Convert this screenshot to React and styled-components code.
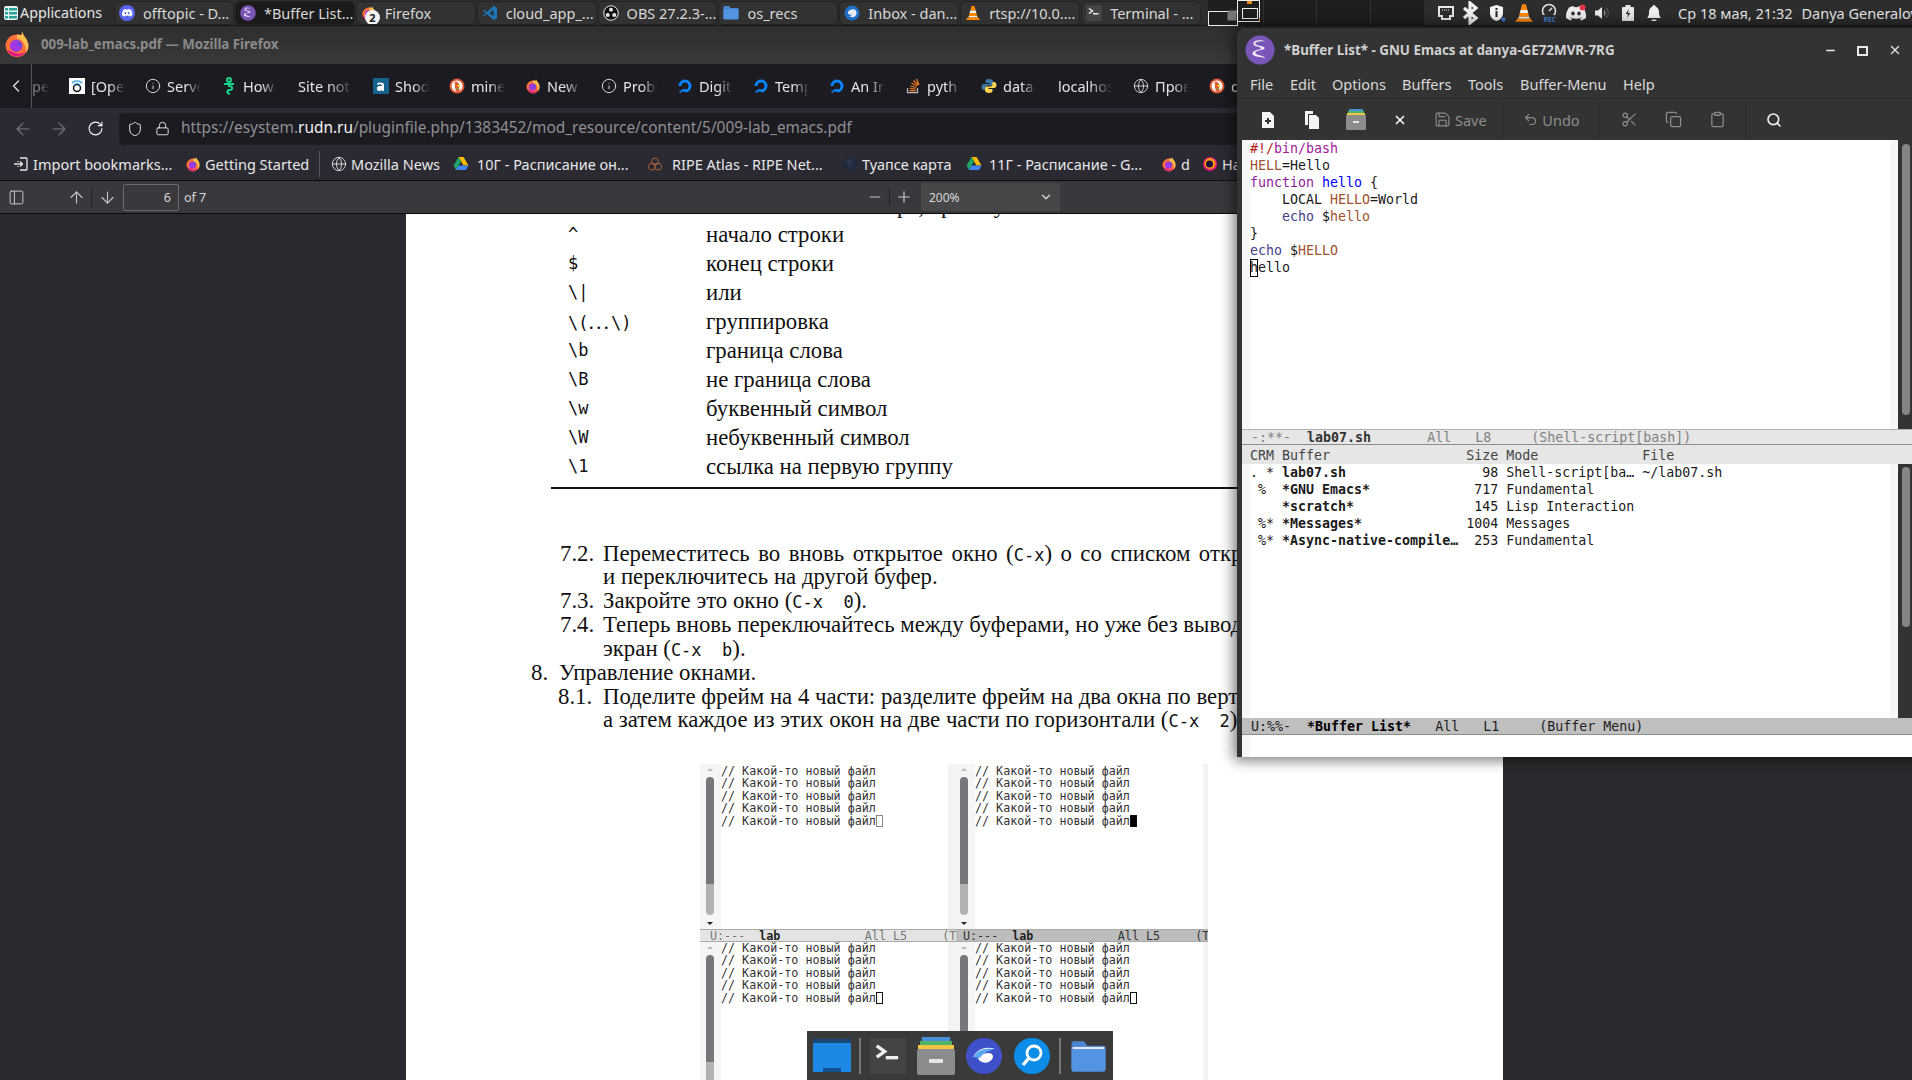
import React from 'react';
import styled, { createGlobalStyle } from 'styled-components';
import {
  ArrowDown,
  ArrowLeft,
  ArrowRight,
  ArrowUp,
  ChevronDown,
  ChevronLeft,
  Clipboard,
  Copy,
  Globe,
  Info,
  Lock,
  Minus,
  PanelLeft,
  Plus,
  RotateCw,
  Save,
  Scissors,
  Search,
  Shield,
  Undo2,
  X,
} from 'lucide-react';

const UI_FONT = '"Noto Sans", "Open Sans", sans-serif';
const MONO_FONT = '"DejaVu Sans Mono", "Liberation Mono", monospace';
const SERIF_FONT = '"Liberation Serif", "DejaVu Serif", serif';

const GlobalStyle = createGlobalStyle`
  html, body {
    margin: 0;
    padding: 0;
    background: #2a2a2e;
    overflow: hidden;
  }
  * { box-sizing: border-box; }
  svg { flex: none; }
`;

const Desktop = styled.div`
  position: relative;
  width: 1912px;
  height: 1080px;
  overflow: hidden;
  display: flex;
  flex-direction: column;
  font-family: ${UI_FONT};
`;

/* ---------- top panel ---------- */

const TopPanel = styled.div`
  height: 26px;
  flex: none;
  display: flex;
  align-items: stretch;
  background: #2d2d2d;
  border-bottom: 1px solid #141414;
  color: #e6e6e6;
  font-size: 14.5px;
`;
const AppMenu = styled.div`
  width: 114px;
  display: flex;
  align-items: center;
  gap: 1px;
  padding-left: 3px;
  white-space: nowrap;
  font-size: 14.3px;
`;
const TaskList = styled.div`
  display: flex;
  gap: 1px;
  padding-top: 1px;
`;
const Task = styled.div`
  position: relative;
  width: 119.9px;
  height: 24px;
  display: flex;
  align-items: center;
  gap: 8px;
  padding-left: 4px;
  padding-bottom: 1px;
  border-radius: 5px;
  border: 1px solid #222;
  background: ${({ $active }) => ($active ? '#1b1b1b' : '#323232')};
  color: #d8d8d8;
  white-space: nowrap;
  overflow: hidden;
`;
const TaskBadge = styled.span`
  position: absolute;
  left: 8px;
  top: 8px;
  width: 15px;
  height: 15px;
  border-radius: 50%;
  background: #f2f2f2;
  color: #222;
  font-size: 11px;
  font-weight: 700;
  line-height: 15px;
  text-align: center;
`;
const Pager = styled.div`
  margin-left: 7px;
  width: 216px;
  background: #1e1e1e;
  display: flex;
`;
const PagerCell = styled.div`
  flex: none;
  width: ${({ $w }) => $w}px;
  border-right: 1px solid #333;
`;
const Tray = styled.div`
  flex: 1;
  display: flex;
  align-items: center;
  padding-left: 9px;
  white-space: nowrap;
  overflow: hidden;
`;
const TraySlot = styled.span`
  flex: none;
  width: ${({ $w }) => $w}px;
  display: flex;
  justify-content: center;
  align-items: center;
`;
const Clock = styled.span`
  margin-left: 11px;
  margin-right: 9px;
`;

/* ---------- firefox ---------- */

const Firefox = styled.div`
  flex: 1;
  min-height: 0;
  display: flex;
  flex-direction: column;
`;
const FfTitle = styled.div`
  height: 38px;
  flex: none;
  display: flex;
  align-items: center;
  gap: 10px;
  padding: 0 0 2px 3px;
  background: linear-gradient(#2e2e2e, #393939);
  color: #8a8a8a;
  font-size: 13.3px;
  font-weight: 700;
`;
const TabStrip = styled.div`
  height: 44px;
  flex: none;
  display: flex;
  align-items: center;
  background: #1c1b22;
  color: #e4e4e4;
  font-size: 14.5px;
`;
const TabBack = styled.div`
  width: 32px;
  height: 100%;
  flex: none;
  display: flex;
  align-items: center;
  justify-content: center;
  border-right: 1px solid #55555c;
`;
const TabScroller = styled.div`
  flex: 1;
  display: flex;
  overflow: hidden;
`;
const TabItem = styled.div`
  flex: none;
  width: ${({ $w }) => $w || 76}px;
  display: flex;
  align-items: center;
  gap: 6px;
  padding-left: ${({ $pad }) => ($pad === undefined ? 8 : $pad)}px;
  padding-right: 12px;
  height: 28px;
`;
const TabLabel = styled.span`
  flex: 1;
  min-width: 0;
  overflow: hidden;
  white-space: nowrap;
  opacity: ${({ $faint }) => ($faint ? 0.45 : 1)};
  -webkit-mask-image: linear-gradient(90deg, #000 55%, transparent 100%);
  mask-image: linear-gradient(90deg, #000 55%, transparent 100%);
`;
const NavBar = styled.div`
  height: 37px;
  flex: none;
  display: flex;
  align-items: center;
  background: #2b2a33;
  padding: 4px 0 0 5px;
  color: #fbfbfe;
`;
const NavButton = styled.span`
  flex: none;
  width: 36px;
  display: flex;
  justify-content: center;
  color: ${({ $dim }) => ($dim ? '#77767d' : '#f0f0f4')};
`;
const UrlField = styled.div`
  flex: 1;
  height: 32px;
  margin-left: 6px;
  display: flex;
  align-items: center;
  padding-left: 8px;
  gap: 12px;
  border-radius: 5px 0 0 5px;
  background: #1c1b22;
  color: #e8e8ea;
`;
const UrlText = styled.span`
  font-size: 15.4px;
  color: #8f8f94;
  white-space: nowrap;
  margin: -2px 0 0 -1px;
  b {
    font-weight: 400;
    color: #f4f4f6;
  }
`;
const Bookmarks = styled.div`
  height: 36px;
  flex: none;
  display: flex;
  align-items: center;
  padding: 2px 0 0 13px;
  background: #2b2a33;
  color: #e8e8ea;
  font-size: 14.5px;
  white-space: nowrap;
  overflow: hidden;
  border-bottom: 1px solid #0e0e10;
`;
const Bookmark = styled.span`
  flex: none;
  width: ${({ $w }) => $w}px;
  display: flex;
  align-items: center;
  gap: ${({ $gap }) => $gap || 4}px;
  overflow: hidden;
`;
const BookmarkSep = styled.span`
  flex: none;
  width: 1px;
  height: 26px;
  background: #55545c;
  margin: 0 11px 0 0;
`;
const PdfBar = styled.div`
  height: 33px;
  flex: none;
  display: flex;
  align-items: center;
  background: #38383d;
  border-bottom: 1px solid #0c0c0d;
  color: #d6d6d8;
  font-size: 12.5px;
`;
const PdfIcon = styled.span`
  flex: none;
  display: flex;
  justify-content: center;
  width: ${({ $w }) => $w}px;
  margin-left: ${({ $ml }) => $ml || 0}px;
  color: #c8c8ca;
`;
const PdfSep = styled.span`
  flex: none;
  width: 1px;
  height: 20px;
  background: #242427;
`;
const PageInput = styled.div`
  flex: none;
  width: 56px;
  height: 27px;
  margin-left: 1px;
  padding-right: 7px;
  text-align: right;
  line-height: 25px;
  background: #38383d;
  border: 1px solid #6a6a6e;
  border-radius: 2px;
`;
const PageCount = styled.span`
  margin-left: 5px;
  width: 677px;
`;
const ZoomSelect = styled.div`
  flex: none;
  width: 139px;
  height: 28px;
  margin-left: 3px;
  display: flex;
  align-items: center;
  justify-content: space-between;
  padding: 0 7px 0 8px;
  background: #474749;
  border-radius: 2px;
  font-size: 12px;
`;

/* ---------- pdf page ---------- */

const Viewer = styled.div`
  flex: 1;
  min-height: 0;
  overflow: hidden;
  background: #2a2a2e;
  padding-left: 406px;
`;
const PdfPage = styled.div`
  width: 1097px;
  height: 100%;
  background: #fff;
  overflow: hidden;
  color: #111;
  font-family: ${SERIF_FONT};
  font-size: 22.8px;
`;
const RegexTable = styled.div`
  margin-top: -23px;
  padding-left: 162px;
`;
const RegexRow = styled.div`
  display: flex;
  height: 29px;
  line-height: 29px;
  white-space: nowrap;
`;
const RegexCode = styled.span`
  flex: none;
  width: 138px;
  font-family: ${MONO_FONT};
  font-size: 17px;
`;
const SerifDots = styled.span`
  font-family: ${SERIF_FONT};
  font-size: 22px;
  letter-spacing: 2px;
`;
const TableRule = styled.div`
  height: 2px;
  margin: 6px 0 0 145px;
  background: #111;
`;
const TaskLines = styled.div`
  margin-top: 52.5px;
`;
const TaskLine = styled.div`
  display: flex;
  height: 23.85px;
  line-height: 23.85px;
  white-space: nowrap;
  padding-left: ${({ $pad }) => $pad}px;
  word-spacing: ${({ $spread }) => $spread || 0}px;
`;
const TaskNum = styled.span`
  flex: none;
  width: ${({ $w }) => $w}px;
`;
const Kbd = styled.span`
  font-family: ${MONO_FONT};
  font-size: 17px;
  white-space: pre;
  word-spacing: 0;
`;

/* embedded emacs screenshot */
const Figure = styled.div`
  margin: 31.5px 0 0 294px;
  width: 508px;
  display: grid;
  grid-template-columns: 256px 252px;
  grid-template-rows: 165px 13px 160px;
  background: #f3f3f3;
  font-family: ${MONO_FONT};
  font-size: 11.7px;
  color: #333;
`;
const FigPane = styled.div`
  display: flex;
  min-width: 0;
  overflow: hidden;
`;
const FigGutter = styled.div`
  flex: none;
  position: relative;
  width: ${({ $w }) => $w}px;
  background: #f5f5f5;
  display: flex;
  flex-direction: column;
  align-items: flex-start;
  padding: 13px 0 0 ${({ $pad }) => $pad}px;

  &::before,
  &::after {
    content: '';
    position: absolute;
    left: ${({ $pad }) => $pad + 1}px;
    border-left: 3px solid transparent;
    border-right: 3px solid transparent;
  }
  &::before {
    top: 4px;
    border-bottom: 3px solid #bbb;
  }
  &::after {
    top: 158px;
    border-top: 3px solid #222;
  }
`;
const FigThumb = styled.div`
  width: 8px;
  height: 138px;
  border-radius: 4px;
  background: linear-gradient(#75777b 0 107px, #b2b2b2 107px);
`;
const FigBody = styled.div`
  flex: 1;
  background: #fff;
  padding-top: ${({ $top }) => $top}px;
  white-space: pre;
  line-height: 12.55px;
  margin-right: ${({ $mr }) => $mr || 0}px;
`;
const FigCursor = styled.span`
  display: inline-block;
  width: 7px;
  height: 12px;
  vertical-align: -2px;
  border: 1px solid ${({ $soft }) => ($soft ? '#888' : '#111')};
  background: ${({ $solid }) => ($solid ? '#000' : 'transparent')};
`;
const FigMode = styled.div`
  overflow: hidden;
  white-space: pre;
  line-height: 12px;
  padding-left: ${({ $pad }) => $pad}px;
  background: ${({ $active }) => ($active ? '#bdbdbd' : '#e4e4e4')};
  border: 1px solid #aaa;
  border-width: 1px 0;
  color: ${({ $active }) => ($active ? '#333' : '#777')};
  b {
    color: #222;
  }
`;

/* ---------- emacs window ---------- */

const EmacsWindow = styled.div`
  position: absolute;
  left: 1237px;
  top: 28px;
  width: 700px;
  height: 729px;
  display: flex;
  flex-direction: column;
  background: #333;
  border-radius: 8px 0 0 0;
  box-shadow: 0 0 14px 3px rgba(0, 0, 0, 0.55);
  color: #dcdcdc;
`;
const EmacsTitle = styled.div`
  height: 42px;
  flex: none;
  display: flex;
  align-items: center;
  padding: 2px 0 0 8px;
  font-size: 13.4px;
  font-weight: 700;
  color: #d0d0d0;
`;
const EmacsTitleText = styled.span`
  margin-left: 9px;
  width: 530px;
`;
const WinButton = styled.span`
  flex: none;
  width: 32.5px;
  display: flex;
  justify-content: center;
  color: #e8e8e8;
`;
const EmacsMenu = styled.div`
  height: 29px;
  flex: none;
  display: flex;
  align-items: center;
  padding-left: 13px;
  font-size: 14.5px;
  color: #dadada;
  border-bottom: 1px solid #2b2b2b;
`;
const MenuItem = styled.span`
  flex: none;
  width: ${({ $w }) => $w}px;
`;
const EmacsTools = styled.div`
  height: 41px;
  flex: none;
  display: flex;
  align-items: center;
  padding-left: 9px;
  font-size: 14.5px;
  color: #8c8c8c;
`;
const ToolSlot = styled.span`
  flex: none;
  width: ${({ $w }) => $w || 44}px;
  margin-left: ${({ $ml }) => $ml || 0}px;
  height: 36px;
  display: flex;
  align-items: center;
  justify-content: ${({ $left }) => ($left ? 'flex-start' : 'center')};
  gap: 4px;
  color: ${({ $on }) => ($on ? '#f0f0f0' : '#8c8c8c')};
`;
const ToolSep = styled.span`
  flex: none;
  width: 1px;
  height: 36px;
  margin-left: ${({ $ml }) => $ml || 0}px;
  background: #2c2c2c;
`;
const EmacsFrame = styled.div`
  flex: 1;
  min-height: 0;
  margin-left: 5px;
  display: flex;
  flex-direction: column;
  background: #fff;
  font-family: ${MONO_FONT};
  font-size: 13.3px;
  color: #1a1a1a;
`;
const EmacsPane = styled.div`
  height: ${({ $h }) => $h}px;
  flex: none;
  display: flex;
`;
const Fringe = styled.div`
  flex: none;
  width: 8px;
  background: #f7f7f7;
`;
const CodeArea = styled.div`
  width: 640px;
  flex: none;
  white-space: pre;
  line-height: 17px;
  overflow: hidden;
`;
const ScrollTrack = styled.div`
  flex: none;
  width: 14px;
  background: #333;
  padding: ${({ $top }) => $top}px 0 0 4px;
`;
const ScrollThumb = styled.div`
  width: 8px;
  height: ${({ $h }) => $h}px;
  border-radius: 4px;
  background: #858585;
`;
const Cursor = styled.span`
  display: inline-block;
  width: 8px;
  height: 18px;
  line-height: 17px;
  vertical-align: top;
  outline: 1px solid #000;
  outline-offset: -1px;
`;
const ModeLine = styled.div`
  height: ${({ $active }) => ($active ? 17 : 16)}px;
  flex: none;
  width: 670px;
  padding-left: 9px;
  white-space: pre;
  line-height: 15px;
  background: ${({ $active }) => ($active ? '#bfbfbf' : '#e6e6e6')};
  border-top: 1px solid ${({ $active }) => ($active ? '#bfbfbf' : '#b0b0b0')};
  border-bottom: 1px solid #8e8e8e;
  color: ${({ $active }) => ($active ? '#222' : '#808080')};
  b {
    color: ${({ $active }) => ($active ? '#000' : '#333')};
  }
`;
const HeaderLine = styled.div`
  height: 19px;
  flex: none;
  width: 670px;
  padding: 2px 0 0 8px;
  background: #e6e6e6;
  white-space: pre;
  line-height: 17px;
  color: #444;
`;
const Echo = styled.div`
  flex: 1;
  background: #fff;
  border-left: 8px solid #f7f7f7;
  width: 670px;
`;
const Paint = styled.span`
  color: ${({ $c }) => $c};
`;

/* ---------- dock ---------- */

const Dock = styled.div`
  position: absolute;
  left: 807px;
  bottom: 0;
  width: 306px;
  height: 49px;
  display: flex;
  align-items: center;
  padding-left: 6px;
  background: #3a3a3a;
`;
const DockSlot = styled.span`
  flex: none;
  width: ${({ $w }) => $w}px;
  display: flex;
  justify-content: ${({ $left }) => ($left ? 'flex-start' : 'center')};
`;
const DockSep = styled.span`
  flex: none;
  width: 2px;
  height: 36px;
  background: #777;
  margin: 0 ${({ $mr }) => $mr}px 0 ${({ $ml }) => $ml}px;
`;

/* ---------- drawn logos ---------- */

const FirefoxLogo = ({ size = 16 }) => (
  <svg width={size} height={size} viewBox="0 0 32 32">
    <circle cx="16" cy="18" r="13" fill="#ff7139" />
    <path d="M16 5c6 0 13 5 13 13 0 3-1 6-3 8 1-7-2-14-10-17z" fill="#ffbd4f" />
    <path d="M22 2c1 4 5 7 6 12l-8-6z" fill="#ffbd4f" />
    <circle cx="15" cy="18" r="7" fill="#7543e3" />
    <path d="M9 14c3-3 8-2 11 0-3 0-5 1-5 3 3 1 5 2 6 5-3 3-8 3-11 1-2-2-3-6-1-9z" fill="#b833e1" opacity="0.7" />
    <path d="M4 22c3 6 8 9 14 8 4-1 7-3 9-6-4 3-10 4-14 2-3-1-6-2-9-4z" fill="#e31587" />
  </svg>
);
const NightlyLogo = () => (
  <svg width="16" height="16" viewBox="0 0 32 32">
    <circle cx="16" cy="16" r="14" fill="#e31587" />
    <circle cx="16" cy="15" r="11" fill="#ff980e" />
    <circle cx="15" cy="16" r="7" fill="#20123a" />
  </svg>
);
const EmacsLogo = ({ size = 16 }) => (
  <svg width={size} height={size} viewBox="0 0 32 32">
    <circle cx="16" cy="16" r="15.5" fill="#7a56b8" />
    <path d="M22 7c-4-1-11 0-11 2 0 3 10 2 10 5 0 2-10 2-10 5 0 3 8 2 11 6-3-2-13-1-14-5-1-4 9-4 9-6 0-2-8-1-8-5 0-4 9-4 13-2z" fill="#f4f0fa" />
  </svg>
);
const DiscordLogo = ({ size = 16, bg = '#5865f2', fg = '#fff' }) => (
  <svg width={size} height={size} viewBox="0 0 32 32">
    {bg && <circle cx="16" cy="16" r="16" fill={bg} />}
    <path d="M23 9.500c-1.500-.7-3-1.100-4.400-1.400l-.5 1c-1.400-.2-2.800-.2-4.200 0l-.5-1c-1.500.3-3 .7-4.400 1.400-2.500 3.800-3.300 7.500-3 11.200 1.800 1.300 3.500 2.100 5.300 2.700l1.100-1.800-1.700-.8.400-.3c3.400 1.600 7.100 1.600 10.500 0l.4.3-1.700.8 1.100 1.800c1.800-.6 3.500-1.400 5.300-2.700.4-4.300-.7-8-2.700-11.200zM12.700 18.400c-1 0-1.900-1-1.900-2.200s.8-2.200 1.900-2.200 1.900 1 1.900 2.200-.8 2.200-1.900 2.200zm6.600 0c-1 0-1.900-1-1.900-2.200s.8-2.200 1.900-2.200 1.900 1 1.900 2.200-.8 2.200-1.900 2.200z" fill={fg} />
  </svg>
);
const ObsLogo = ({ size = 16 }) => (
  <svg width={size} height={size} viewBox="0 0 32 32">
    <circle cx="16" cy="16" r="14.5" fill="#111" stroke="#e8e8e8" strokeWidth="2" />
    <circle cx="16" cy="9.500" r="4" fill="#e8e8e8" />
    <circle cx="9.500" cy="20" r="4" fill="#e8e8e8" />
    <circle cx="22.500" cy="20" r="4" fill="#e8e8e8" />
    <circle cx="16" cy="16" r="3" fill="#111" />
  </svg>
);
const VscodeLogo = () => (
  <svg width="16" height="16" viewBox="0 0 32 32">
    <path d="M23 2l7 3.500v21L23 30 10 18l-6 4.500L2 21l6-5-6-5 2-1.500L10 14z" fill="#1f77b8" />
    <path d="M23 9.500L15 16l8 6.500z" fill="#2f2f2f" />
  </svg>
);
const FolderLogo = ({ w = 16, h = 15, back = '#4a86cf', front = '#5294e2', stripe }) => (
  <svg width={w} height={h} viewBox="0 0 32 30">
    <path d="M1 4a2 2 0 0 1 2-2h9l3 4h14a2 2 0 0 1 2 2v18a2 2 0 0 1-2 2H3a2 2 0 0 1-2-2z" fill={back} />
    {stripe && <rect x="2" y="7" width="28" height="2" fill="#dfe7f2" />}
    <path d="M1 9h30v18a2 2 0 0 1-2 2H3a2 2 0 0 1-2-2z" fill={front} />
  </svg>
);
const ThunderbirdLogo = () => (
  <svg width="16" height="16" viewBox="0 0 32 32">
    <circle cx="16" cy="16" r="15" fill="#1f6fc9" />
    <path d="M8 14c3-6 11-7 15-4 3 3 3 10-1 13-4 2-9 2-12-1 3 0 5-1 5-3-4 1-8-1-7-5z" fill="#e8edf3" />
  </svg>
);
const VlcLogo = ({ size = 16 }) => (
  <svg width={size} height={size} viewBox="0 0 32 32">
    <path d="M13 2h6l2.500 9h-11z" fill="#ff8800" />
    <path d="M10.500 11h11l1.200 5H9.300z" fill="#f2f2f2" />
    <path d="M9.300 16h13.400l1.600 6H7.700z" fill="#ff8800" />
    <path d="M7.700 22h16.600l1 3H6.700z" fill="#f2f2f2" />
    <path d="M5 25h22l3 5H2z" fill="#ff8800" />
  </svg>
);
const TerminalLogo = ({ size = 16 }) => (
  <svg width={size} height={size} viewBox="0 0 32 32">
    <rect width="32" height="32" rx="3" fill="#444" />
    <path d="M6 7l7 5-7 5" fill="none" stroke="#eee" strokeWidth="3" />
    <rect x="14" y="16" width="11" height="3" fill="#eee" />
  </svg>
);
const MenuLogo = () => (
  <svg width="16" height="16" viewBox="0 0 16 16">
    <rect x="1" y="1" width="14" height="14" rx="2" fill="#e8f4f2" />
    <rect x="2" y="3" width="3" height="2.500" fill="#2aa198" />
    <rect x="6" y="3" width="8" height="2.500" fill="#2aa198" />
    <rect x="2" y="7" width="3" height="2.500" fill="#2aa198" />
    <rect x="6" y="7" width="8" height="2.500" fill="#2aa198" />
    <rect x="2" y="11" width="3" height="2.500" fill="#2aa198" />
    <rect x="6" y="11" width="8" height="2.500" fill="#2aa198" />
  </svg>
);
const DriveLogo = () => (
  <svg width="16" height="15" viewBox="0 0 32 28">
    <path d="M11 1h10l10 17H21z" fill="#fbbc04" />
    <path d="M11 1L1 18l5 9 10-17z" fill="#1fa463" />
    <path d="M6 27h20l5-9H11z" fill="#4285f4" />
  </svg>
);
const RipeLogo = () => (
  <svg width="16" height="16" viewBox="0 0 32 32" fill="none" stroke="#a8623a" strokeWidth="2">
    <circle cx="16" cy="11" r="7" />
    <circle cx="10" cy="21" r="7" />
    <circle cx="22" cy="21" r="7" />
  </svg>
);
const MapLogo = () => (
  <svg width="16" height="16" viewBox="0 0 32 32">
    <circle cx="16" cy="16" r="15" fill="#202a3c" />
    <path d="M16 5c5 0 7 4 6 8-1 5-4 9-6 13-2-4-5-8-6-13-1-4 1-8 6-8z" fill="#27344b" />
  </svg>
);
const WifiLogo = () => (
  <svg width="16" height="16" viewBox="0 0 16 16">
    <rect width="16" height="16" fill="#fff" />
    <circle cx="8" cy="10" r="3.500" fill="none" stroke="#111" strokeWidth="1.500" />
    <path d="M3 5a7 7 0 0 1 10 0M5 7a4 4 0 0 1 6 0" fill="none" stroke="#2f9fe0" strokeWidth="1.300" />
  </svg>
);
const AmazonLogo = () => (
  <svg width="16" height="16" viewBox="0 0 16 16">
    <rect width="16" height="16" fill="#15628f" />
    <path d="M4 6c1-2 7-2 7 1v6H9v-1c-2 2-6 1-5-2 0-2 3-2 5-2 0-2-3-2-4-1z" fill="#fff" />
  </svg>
);
const SproutLogo = () => (
  <svg width="16" height="18" viewBox="0 0 16 18" fill="none" stroke="#17d48a" strokeWidth="2">
    <circle cx="8" cy="3" r="2" />
    <path d="M3 7h10M8 5v4c4 0 4 4 1 4-3 0-4 3 0 4" />
  </svg>
);
const DuckLogo = () => (
  <svg width="16" height="16" viewBox="0 0 32 32">
    <circle cx="16" cy="16" r="15" fill="#de5833" />
    <circle cx="16" cy="16" r="11" fill="#fff" />
    <path d="M11 8c5-2 9 1 9 6l1 13h-7l-2-8z" fill="#de5833" />
    <path d="M16 14h7l-1 3h-6z" fill="#fdd20a" />
    <path d="M15 20l5 2-4 2z" fill="#65bc46" />
  </svg>
);
const DoLogo = () => (
  <svg width="16" height="16" viewBox="0 0 32 32" fill="none">
    <path d="M16 29v-6a7 7 0 1 0-7-7H3A13 13 0 1 1 16 29z" fill="#0a84ff" />
    <rect x="10" y="22" width="6" height="5" fill="#0a84ff" />
    <rect x="5" y="25" width="5" height="4" fill="#0a84ff" />
  </svg>
);
const StackLogo = () => (
  <svg width="16" height="16" viewBox="0 0 32 32">
    <path d="M5 20v9h20v-9" fill="none" stroke="#bcbbbb" strokeWidth="2.500" />
    <path d="M9 25h12M9.500 21l12 1M10.500 16l12 3M13 10l11 6M17 5l9 9M23 2l5 12" stroke="#f48024" strokeWidth="2.500" />
  </svg>
);
const PythonLogo = () => (
  <svg width="16" height="16" viewBox="0 0 32 32">
    <path d="M16 2c-6 0-7 2-7 5v3h8v2H6c-3 0-5 2-5 6s2 6 5 6h3v-4c0-3 2-5 5-5h6c3 0 4-2 4-4V7c0-3-3-5-8-5z" fill="#3b78a8" />
    <path d="M16 30c6 0 7-2 7-5v-3h-8v-2h11c3 0 5-2 5-6s-2-6-5-6h-3v4c0 3-2 5-5 5h-6c-3 0-4 2-4 4v4c0 3 3 5 8 5z" fill="#fdd54f" />
  </svg>
);
const ImportIcon = () => (
  <svg width="16" height="16" viewBox="0 0 16 16" fill="none" stroke="#e8e8ea" strokeWidth="1.300">
    <path d="M7 2h6a1 1 0 0 1 1 1v10a1 1 0 0 1-1 1H7M5 5v1M5 10v1M1 8h8M7 5.500L9.500 8 7 10.500" />
  </svg>
);

/* tray drawings */
const NetIcon = () => (
  <svg width="18" height="16" viewBox="0 0 18 16" fill="none" stroke="#e8e8e8" strokeWidth="2">
    <path d="M2 2h14v9h-3v3H5v-3H2z" />
    <path d="M5 5h8" strokeWidth="1" strokeDasharray="1 1" />
  </svg>
);
const BluetoothIcon = () => (
  <svg width="17" height="24" viewBox="0 0 17 24" fill="none" stroke="#f0f0f0" strokeWidth="3.200">
    <path d="M2 7l12 10-6 5V2l6 5L2 17" />
  </svg>
);
const InfoShield = () => (
  <svg width="17" height="18" viewBox="0 0 17 18">
    <path d="M7.500 1l6.500 2v6c0 4-3 7-6.500 8C4 16 1 13 1 9V3z" fill="#f4f4f4" />
    <rect x="6.500" y="4" width="2" height="2" fill="#222" />
    <rect x="6.500" y="7" width="2" height="6" fill="#222" />
    <circle cx="14.500" cy="15.500" r="2" fill="#3a7bd5" />
  </svg>
);
const RecIcon = () => (
  <svg width="18" height="20" viewBox="0 0 18 20">
    <circle cx="8" cy="8" r="6.500" fill="none" stroke="#e0e0e0" strokeWidth="1.600" />
    <path d="M8 8l3-3" stroke="#e0e0e0" strokeWidth="1.600" />
    <rect x="2" y="12" width="15" height="7" fill="#2d2d2d" />
    <text x="2.500" y="18.500" fontSize="6.500" fontWeight="700" fill="#3f7fd8" fontFamily="Noto Sans">REC</text>
  </svg>
);
const TrayDiscord = () => (
  <svg width="22" height="18" viewBox="0 0 22 18">
    <path d="M18 3.500C16.500 2.700 15 2.300 13.500 2l-.6 1.200a15 15 0 0 0-3.800 0L8.500 2C7 2.300 5.500 2.700 4 3.500 1.500 7 .8 10.500 1 14c1.700 1.200 3.400 2 5 2.500l1.100-1.800-1.700-.8.400-.3c3.500 1.600 7.400 1.600 10.400 0l.4.3-1.700.8L16 16.500c1.600-.5 3.300-1.300 5-2.500.4-4-.6-7.500-3-10.500zM8 11.500c-1 0-1.700-.9-1.700-2s.7-2 1.700-2 1.700.9 1.700 2-.7 2-1.700 2zm6 0c-1 0-1.700-.9-1.700-2s.7-2 1.700-2 1.700.9 1.700 2-.7 2-1.700 2z" fill="#ececec" />
    <circle cx="17.500" cy="3.500" r="3" fill="#e63946" />
  </svg>
);
const VolumeIcon = () => (
  <svg width="14" height="14" viewBox="0 0 14 14">
    <path d="M0 4.500h3L7 1v12L3 9.500H0z" fill="#ececec" />
    <path d="M9 3.500c2 1.500 2 5.500 0 7z" fill="#888" />
    <path d="M11 2c3 2.500 3 7.500 0 10" fill="none" stroke="#666" />
  </svg>
);
const BatteryIcon = () => (
  <svg width="12" height="18" viewBox="0 0 12 18">
    <path d="M3.500 1h5v2H11a1 1 0 0 1 1 1v13H0V4a1 1 0 0 1 1-1h2.500z" fill="#e8e8e8" />
    <path d="M7 5L3.500 10H6l-1 4 3.500-5H6z" fill="#2d2d2d" />
  </svg>
);
const BellIcon = () => (
  <svg width="16" height="18" viewBox="0 0 16 18">
    <path d="M8 1a1.500 1.500 0 0 1 1.500 1.600C12 3.500 13 6 13 8.500c0 3 1 4.500 2 5.500H1c1-1 2-2.500 2-5.500C3 6 4 3.500 6.500 2.600A1.500 1.500 0 0 1 8 1z" fill="#f0f0f0" />
    <rect x="5.500" y="15.500" width="5" height="1.500" rx="0.700" fill="#f0f0f0" />
  </svg>
);

/* pager drawing: outlines of the windows on the visible desktop */
const PagerMini = () => (
  <svg width="56" height="26" viewBox="0 0 56 26" fill="none" stroke="#eee" strokeWidth="1">
    <rect x="0.500" y="11.500" width="29" height="14" />
    <rect x="19.500" y="10.500" width="9" height="10" fill="#777" stroke="none" />
    <rect x="29.500" y="0.500" width="22" height="21" />
    <rect x="34.500" y="8.500" width="15" height="10" />
    <rect x="39" y="1" width="5" height="3" fill="#e88a1a" stroke="none" />
    <rect x="51" y="18" width="1" height="3" fill="#e88a1a" stroke="none" />
  </svg>
);

/* emacs toolbar drawings */
const NewFileIcon = () => (
  <svg width="14" height="16" viewBox="0 0 14 16">
    <path d="M1 0h8l4 4v12H1z" fill="#f4f4f4" />
    <path d="M6 6h2v2h2v2H8v2H6v-2H4V8h2z" fill="#333" />
  </svg>
);
const OpenFileIcon = () => (
  <svg width="16" height="18" viewBox="0 0 16 18">
    <path d="M1 0h8v3H4v11H1z" fill="#f4f4f4" />
    <path d="M5 4h7l3 3v11H5z" fill="#f4f4f4" />
  </svg>
);
const FilesIcon = () => (
  <svg width="20" height="21" viewBox="0 0 20 21">
    <rect x="3" y="0" width="14" height="3" fill="#4a90d9" />
    <rect x="2" y="2" width="16" height="3" fill="#4fb36a" />
    <rect x="1" y="4" width="18" height="3" fill="#f4c542" />
    <rect y="6" width="20" height="15" rx="1" fill="#8c8c8c" />
    <rect x="7" y="12" width="6" height="2" fill="#e6e6e6" />
  </svg>
);

const tabs = [
  [<WifiLogo />, '[Open'],
  [<Info size={16} strokeWidth={1.4} />, 'Server'],
  [<SproutLogo />, 'How'],
  [null, 'Site not'],
  [<AmazonLogo />, 'Shodan'],
  [<DuckLogo />, 'mine'],
  [<FirefoxLogo />, 'New'],
  [<Info size={16} strokeWidth={1.4} />, 'Probl'],
  [<DoLogo />, 'Digit'],
  [<DoLogo />, 'Temp'],
  [<DoLogo />, 'An In'],
  [<StackLogo />, 'pyth'],
  [<PythonLogo />, 'data'],
  [null, 'localhos'],
  [<Globe size={16} strokeWidth={1.3} />, 'Пров'],
  [<DuckLogo />, 'd'],
];

const regexRows = [
  ['[^...]', 'не символы из набора, кроме указанных'],
  ['^', 'начало строки'],
  ['$', 'конец строки'],
  ['\\|', 'или'],
  [
    <>
      \(<SerifDots>...</SerifDots>\)
    </>,
    'группировка',
  ],
  ['\\b', 'граница слова'],
  ['\\B', 'не граница слова'],
  ['\\w', 'буквенный символ'],
  ['\\W', 'небуквенный символ'],
  ['\\1', 'ссылка на первую группу'],
];

const FILE_LINE = '// Какой-то новый файл';

const FigText = ({ cursor }) => (
  <>
    {`${FILE_LINE}\n${FILE_LINE}\n${FILE_LINE}\n${FILE_LINE}\n${FILE_LINE}`}
    {cursor}
  </>
);

const FigScroll = ({ w, pad }) => (
  <FigGutter $w={w} $pad={pad}>
    <FigThumb />
  </FigGutter>
);

const App = () => (
  <Desktop>
    <GlobalStyle />
    <TopPanel>
      <AppMenu>
        <MenuLogo />
        <span>Applications</span>
      </AppMenu>
      <TaskList>
        <Task>
          <DiscordLogo />
          offtopic - D...
        </Task>
        <Task $active>
          <EmacsLogo />
          *Buffer List...
        </Task>
        <Task>
          <FirefoxLogo />
          <TaskBadge>2</TaskBadge>
          Firefox
        </Task>
        <Task>
          <VscodeLogo />
          cloud_app_...
        </Task>
        <Task>
          <ObsLogo />
          OBS 27.2.3-...
        </Task>
        <Task>
          <FolderLogo />
          os_recs
        </Task>
        <Task>
          <ThunderbirdLogo />
          Inbox - dan...
        </Task>
        <Task>
          <VlcLogo />
          rtsp://10.0....
        </Task>
        <Task>
          <TerminalLogo />
          Terminal - ...
        </Task>
      </TaskList>
      <Pager>
        <PagerCell $w={56}>
          <PagerMini />
        </PagerCell>
        <PagerCell $w={53} />
        <PagerCell $w={54} />
      </Pager>
      <Tray>
        <TraySlot $w={25}>
          <NetIcon />
        </TraySlot>
        <TraySlot $w={25}>
          <BluetoothIcon />
        </TraySlot>
        <TraySlot $w={28}>
          <InfoShield />
        </TraySlot>
        <TraySlot $w={26}>
          <VlcLogo size={20} />
        </TraySlot>
        <TraySlot $w={26}>
          <RecIcon />
        </TraySlot>
        <TraySlot $w={26}>
          <TrayDiscord />
        </TraySlot>
        <TraySlot $w={25}>
          <VolumeIcon />
        </TraySlot>
        <TraySlot $w={27}>
          <BatteryIcon />
        </TraySlot>
        <TraySlot $w={26}>
          <BellIcon />
        </TraySlot>
        <Clock>Ср 18 мая, 21:32</Clock>
        <span>Danya Generalov</span>
      </Tray>
    </TopPanel>

    <Firefox>
      <FfTitle>
        <FirefoxLogo size={28} />
        009-lab_emacs.pdf — Mozilla Firefox
      </FfTitle>
      <TabStrip>
        <TabBack>
          <ChevronLeft size={20} strokeWidth={1.5} />
        </TabBack>
        <TabScroller>
          <TabItem $w={29} $pad={0}>
            <TabLabel $faint>per</TabLabel>
          </TabItem>
          {tabs.map(([icon, label]) => (
            <TabItem key={label} $pad={icon ? 8 : 9}>
              {icon}
              <TabLabel>{label}</TabLabel>
            </TabItem>
          ))}
        </TabScroller>
      </TabStrip>
      <NavBar>
        <NavButton $dim>
          <ArrowLeft size={20} strokeWidth={1.4} />
        </NavButton>
        <NavButton $dim>
          <ArrowRight size={20} strokeWidth={1.4} />
        </NavButton>
        <NavButton>
          <RotateCw size={17} strokeWidth={1.6} />
        </NavButton>
        <UrlField>
          <Shield size={16} strokeWidth={1.5} />
          <Lock size={15} strokeWidth={1.5} />
          <UrlText>
            https://esystem.<b>rudn.ru</b>/pluginfile.php/1383452/mod_resource/content/5/009-lab_emacs.pdf
          </UrlText>
        </UrlField>
      </NavBar>
      <Bookmarks>
        <Bookmark $w={172}>
          <ImportIcon />
          Import bookmarks...
        </Bookmark>
        <Bookmark $w={134}>
          <FirefoxLogo />
          Getting Started
        </Bookmark>
        <BookmarkSep />
        <Bookmark $w={122}>
          <Globe size={16} strokeWidth={1.3} />
          Mozilla News
        </Bookmark>
        <Bookmark $w={194} $gap={8}>
          <DriveLogo />
          10Г - Расписание он...
        </Bookmark>
        <Bookmark $w={195} $gap={9}>
          <RipeLogo />
          RIPE Atlas - RIPE Net...
        </Bookmark>
        <Bookmark $w={124}>
          <MapLogo />
          Туапсе карта
        </Bookmark>
        <Bookmark $w={195} $gap={7}>
          <DriveLogo />
          11Г - Расписание - G...
        </Bookmark>
        <Bookmark $w={41}>
          <FirefoxLogo />d
        </Bookmark>
        <Bookmark $w={60}>
          <NightlyLogo />
          Hacker
        </Bookmark>
      </Bookmarks>
      <PdfBar>
        <PdfIcon $w={32}>
          <PanelLeft size={17} strokeWidth={1.4} />
        </PdfIcon>
        <PdfIcon $w={30} $ml={29}>
          <ArrowUp size={19} strokeWidth={1.4} />
        </PdfIcon>
        <PdfSep />
        <PdfIcon $w={30}>
          <ArrowDown size={19} strokeWidth={1.4} />
        </PdfIcon>
        <PageInput>6</PageInput>
        <PageCount>of 7</PageCount>
        <PdfIcon $w={28}>
          <Minus size={16} strokeWidth={1.6} />
        </PdfIcon>
        <PdfSep />
        <PdfIcon $w={28}>
          <Plus size={18} strokeWidth={1.6} />
        </PdfIcon>
        <ZoomSelect>
          200%
          <ChevronDown size={14} strokeWidth={2.4} />
        </ZoomSelect>
      </PdfBar>
      <Viewer>
        <PdfPage>
          <RegexTable>
            {regexRows.map(([code, text]) => (
              <RegexRow key={text}>
                <RegexCode>{code}</RegexCode>
                {text}
              </RegexRow>
            ))}
          </RegexTable>
          <TableRule />
          <TaskLines>
            <TaskLine $pad={154} $spread={2.8}>
              <TaskNum $w={43}>7.2.</TaskNum>
              <span>
                Переместитесь во вновь открытое окно (<Kbd>C-x</Kbd>) o со списком открытых буферов
              </span>
            </TaskLine>
            <TaskLine $pad={197}>и переключитесь на другой буфер.</TaskLine>
            <TaskLine $pad={154}>
              <TaskNum $w={43}>7.3.</TaskNum>
              <span>
                Закройте это окно (<Kbd>C-x  0</Kbd>).
              </span>
            </TaskLine>
            <TaskLine $pad={154}>
              <TaskNum $w={43}>7.4.</TaskNum>
              <span>Теперь вновь переключайтесь между буферами, но уже без вывода их списка на</span>
            </TaskLine>
            <TaskLine $pad={197}>
              <span>
                экран (<Kbd>C-x  b</Kbd>).
              </span>
            </TaskLine>
            <TaskLine $pad={125}>
              <TaskNum $w={28}>8.</TaskNum>
              Управление окнами.
            </TaskLine>
            <TaskLine $pad={152}>
              <TaskNum $w={45}>8.1.</TaskNum>
              <span>Поделите фрейм на 4 части: разделите фрейм на два окна по вертикали,</span>
            </TaskLine>
            <TaskLine $pad={197}>
              <span>
                а затем каждое из этих окон на две части по горизонтали (<Kbd>C-x  2</Kbd>)
              </span>
            </TaskLine>
          </TaskLines>
          <Figure>
            <FigPane>
              <FigScroll w={21} pad={6} />
              <FigBody $mr={8} $top={1}>
                <FigText cursor={<FigCursor $soft />} />
              </FigBody>
            </FigPane>
            <FigPane>
              <FigScroll w={19} pad={4} />
              <FigBody $mr={5} $top={1}>
                <FigText cursor={<FigCursor $solid />} />
              </FigBody>
            </FigPane>
            <FigMode $pad={10}>
              {'U:---  '}
              <b>lab</b>
              {'            All L5     (T'}
            </FigMode>
            <FigMode $active $pad={7}>
              {'U:---  '}
              <b>lab</b>
              {'            All L5     (T'}
            </FigMode>
            <FigPane>
              <FigScroll w={21} pad={6} />
              <FigBody $mr={8} $top={0}>
                <FigText cursor={<FigCursor />} />
              </FigBody>
            </FigPane>
            <FigPane>
              <FigScroll w={19} pad={4} />
              <FigBody $mr={5} $top={0}>
                <FigText cursor={<FigCursor />} />
              </FigBody>
            </FigPane>
          </Figure>
        </PdfPage>
      </Viewer>
    </Firefox>

    <EmacsWindow>
      <EmacsTitle>
        <EmacsLogo size={30} />
        <EmacsTitleText>*Buffer List* - GNU Emacs at danya-GE72MVR-7RG</EmacsTitleText>
        <WinButton>
          <Minus size={13} strokeWidth={2.5} />
        </WinButton>
        <WinButton>
          <svg width="11" height="11" viewBox="0 0 11 11" fill="none" stroke="currentColor" strokeWidth="2">
            <rect x="1" y="2" width="9" height="8" />
          </svg>
        </WinButton>
        <WinButton>
          <X size={14} strokeWidth={2.2} />
        </WinButton>
      </EmacsTitle>
      <EmacsMenu>
        <MenuItem $w={40}>File</MenuItem>
        <MenuItem $w={42}>Edit</MenuItem>
        <MenuItem $w={70}>Options</MenuItem>
        <MenuItem $w={66}>Buffers</MenuItem>
        <MenuItem $w={52}>Tools</MenuItem>
        <MenuItem $w={103}>Buffer-Menu</MenuItem>
        <MenuItem $w={40}>Help</MenuItem>
      </EmacsMenu>
      <EmacsTools>
        <ToolSlot $on>
          <NewFileIcon />
        </ToolSlot>
        <ToolSlot $on>
          <OpenFileIcon />
        </ToolSlot>
        <ToolSlot $on>
          <FilesIcon />
        </ToolSlot>
        <ToolSlot $on>
          <X size={14} strokeWidth={3} />
        </ToolSlot>
        <ToolSlot $w={69} $ml={12} $left>
          <Save size={17} strokeWidth={1.6} />
          Save
        </ToolSlot>
        <ToolSep />
        <ToolSlot $w={95}>
          <Undo2 size={15} strokeWidth={1.7} />
          Undo
        </ToolSlot>
        <ToolSep />
        <ToolSlot $ml={7}>
          <Scissors size={17} strokeWidth={1.6} />
        </ToolSlot>
        <ToolSlot>
          <Copy size={17} strokeWidth={1.8} />
        </ToolSlot>
        <ToolSlot>
          <Clipboard size={17} strokeWidth={1.8} />
        </ToolSlot>
        <ToolSep $ml={6} />
        <ToolSlot $ml={6} $on>
          <Search size={16} strokeWidth={2.4} />
        </ToolSlot>
      </EmacsTools>
      <EmacsFrame>
        <EmacsPane $h={289}>
          <Fringe />
          <CodeArea>
            <Paint $c="#b22222">#!/</Paint>
            <Paint $c="#a0209a">bin/bash</Paint>
            {'\n'}
            <Paint $c="#a0522d">HELL</Paint>
            {'=Hello\n'}
            <Paint $c="#8b1a9b">function</Paint> <Paint $c="#0000ff">hello</Paint>
            {' {\n    LOCAL '}
            <Paint $c="#a0522d">HELLO</Paint>
            {'=World\n    '}
            <Paint $c="#483d8b">echo</Paint> {'$'}
            <Paint $c="#a0522d">hello</Paint>
            {'\n}\n'}
            <Paint $c="#483d8b">echo</Paint> {'$'}
            <Paint $c="#a0522d">HELLO</Paint>
            {'\n'}
            <Cursor>h</Cursor>
            ello
          </CodeArea>
          <Fringe />
          <ScrollTrack $top={4}>
            <ScrollThumb $h={271} />
          </ScrollTrack>
        </EmacsPane>
        <ModeLine>
          {'-:**-  '}
          <b>lab07.sh</b>
          {'       All   L8     (Shell-script[bash])'}
        </ModeLine>
        <HeaderLine>{'CRM Buffer                 Size Mode             File'}</HeaderLine>
        <EmacsPane $h={254}>
          <Fringe />
          <CodeArea>
            {'. * '}
            <b>lab07.sh</b>
            {'                 98 Shell-script[ba… ~/lab07.sh\n %  '}
            <b>*GNU Emacs*</b>
            {'             717 Fundamental\n    '}
            <b>*scratch*</b>
            {'               145 Lisp Interaction\n %* '}
            <b>*Messages*</b>
            {'             1004 Messages\n %* '}
            <b>*Async-native-compile…</b>
            {'  253 Fundamental'}
          </CodeArea>
          <Fringe />
          <ScrollTrack $top={3}>
            <ScrollThumb $h={160} />
          </ScrollTrack>
        </EmacsPane>
        <ModeLine $active>
          {'U:%%-  '}
          <b>*Buffer List*</b>
          {'   All   L1     (Buffer Menu)'}
        </ModeLine>
        <Echo />
      </EmacsFrame>
    </EmacsWindow>

    <Dock>
      <DockSlot $w={38}>
        <svg width="38" height="34" viewBox="0 0 38 34">
          <rect y="4" width="38" height="29" rx="1" fill="#1e88e5" />
          <rect width="38" height="4" y="0" fill="#1a4a7a" />
          <rect x="10" y="29" width="18" height="4" fill="#14508f" />
        </svg>
      </DockSlot>
      <DockSep $ml={8} $mr={9} />
      <DockSlot $w={42} $left>
        <TerminalLogo size={36} />
      </DockSlot>
      <DockSlot $w={48}>
        <svg width="38" height="38" viewBox="0 0 38 38">
          <rect x="5" y="0" width="28" height="6" fill="#4a90d9" />
          <rect x="3" y="4" width="32" height="6" fill="#4fb36a" />
          <rect x="1" y="8" width="36" height="6" fill="#f4c542" />
          <rect y="12" width="38" height="26" rx="2" fill="#8c8c8c" />
          <rect x="12" y="22" width="14" height="4" rx="1" fill="#e6e6e6" />
        </svg>
      </DockSlot>
      <DockSlot $w={48}>
        <svg width="36" height="36" viewBox="0 0 36 36">
          <circle cx="18" cy="18" r="18" fill="#3f51c9" />
          <path d="M7 19c4-8 14-11 22-8-5 0-9 2-11 5 5-2 8-1 9 2 0 5-6 8-11 6-3-1-4-3-4-5-2 0-4 0-5 0z" fill="#fff" />
          <path d="M7 19c4-7 13-10 22-8-6 1-12 4-15 9z" fill="#5aa9f0" />
        </svg>
      </DockSlot>
      <DockSlot $w={48}>
        <svg width="36" height="36" viewBox="0 0 36 36">
          <circle cx="18" cy="18" r="18" fill="#0b8de8" />
          <circle cx="20" cy="15" r="7" fill="none" stroke="#fff" strokeWidth="2.800" />
          <path d="M15 20l-6 7" stroke="#fff" strokeWidth="3.400" />
        </svg>
      </DockSlot>
      <DockSep $ml={3} $mr={9} />
      <DockSlot $w={38} $left>
        <FolderLogo w={37} h={34} stripe />
      </DockSlot>
    </Dock>
  </Desktop>
);

export default App;
